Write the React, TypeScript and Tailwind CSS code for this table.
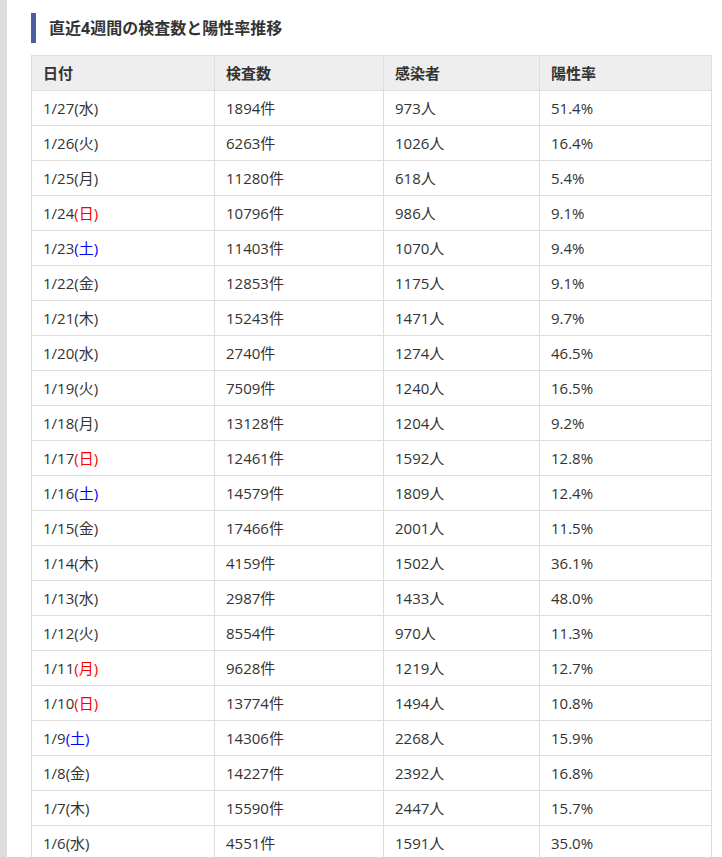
import React from "react";

const rows: [string, string, string, string, string][] = [
  ["1/27", "水", "1894件", "973人", "51.4%"],
  ["1/26", "火", "6263件", "1026人", "16.4%"],
  ["1/25", "月", "11280件", "618人", "5.4%"],
  ["1/24", "日", "10796件", "986人", "9.1%"],
  ["1/23", "土", "11403件", "1070人", "9.4%"],
  ["1/22", "金", "12853件", "1175人", "9.1%"],
  ["1/21", "木", "15243件", "1471人", "9.7%"],
  ["1/20", "水", "2740件", "1274人", "46.5%"],
  ["1/19", "火", "7509件", "1240人", "16.5%"],
  ["1/18", "月", "13128件", "1204人", "9.2%"],
  ["1/17", "日", "12461件", "1592人", "12.8%"],
  ["1/16", "土", "14579件", "1809人", "12.4%"],
  ["1/15", "金", "17466件", "2001人", "11.5%"],
  ["1/14", "木", "4159件", "1502人", "36.1%"],
  ["1/13", "水", "2987件", "1433人", "48.0%"],
  ["1/12", "火", "8554件", "970人", "11.3%"],
  ["1/11", "月*", "9628件", "1219人", "12.7%"],
  ["1/10", "日", "13774件", "1494人", "10.8%"],
  ["1/9", "土", "14306件", "2268人", "15.9%"],
  ["1/8", "金", "14227件", "2392人", "16.8%"],
  ["1/7", "木", "15590件", "2447人", "15.7%"],
  ["1/6", "水", "4551件", "1591人", "35.0%"],
];

function Day({ d }: { d: string }) {
  const holiday = d.endsWith("*");
  const name = d.replace("*", "");
  if (name === "日" || holiday) return <span className="text-[#ff0000]">({name})</span>;
  if (name === "土") return <span className="text-[#0000ff]">({name})</span>;
  return <span>({name})</span>;
}

export default function App() {
  const font = { fontFamily: '"Open Sans", "Noto Sans CJK JP", sans-serif' };
  return (
    <div className="flex min-h-[857px] bg-white" style={font}>
      <div className="w-[7px] shrink-0 bg-[#dddddd]" />
      <div className="flex-1 pl-[24px] pr-[11px] pt-[13px]">
        <div className="flex items-center h-[30px] border-l-[5px] border-[#4a5ea0] pl-[13px]">
          <h2 className="text-[16px] font-bold text-[#333333] leading-none">直近4週間の検査数と陽性率推移</h2>
        </div>
        <table className="mt-[12px] w-[680px] border-collapse text-[15px] text-[#333333] table-fixed">
          <colgroup>
            <col className="w-[183px]" />
            <col className="w-[169px]" />
            <col className="w-[156px]" />
            <col className="w-[172px]" />
          </colgroup>
          <thead>
            <tr className="h-[35px] bg-[#eeeeee]">
              {["日付", "検査数", "感染者", "陽性率"].map((h) => (
                <th key={h} className="border border-[#dddddd] px-[11px] py-0 text-left font-bold leading-none">
                  {h}
                </th>
              ))}
            </tr>
          </thead>
          <tbody>
            {rows.map((r) => (
              <tr key={r[0]} className="h-[35px]">
                <td className="border border-[#dddddd] px-[11px] py-0 leading-none">
                  {r[0]}
                  <Day d={r[1]} />
                </td>
                <td className="border border-[#dddddd] px-[11px] py-0 leading-none">{r[2]}</td>
                <td className="border border-[#dddddd] px-[11px] py-0 leading-none">{r[3]}</td>
                <td className="border border-[#dddddd] px-[11px] py-0 leading-none">{r[4]}</td>
              </tr>
            ))}
          </tbody>
        </table>
      </div>
    </div>
  );
}
